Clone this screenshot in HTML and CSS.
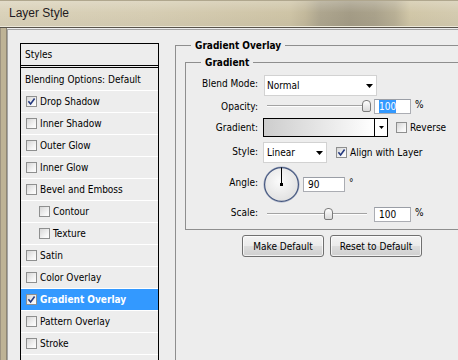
FILE: index.html
```html
<!DOCTYPE html>
<html>
<head>
<meta charset="utf-8">
<link rel="stylesheet" href="styles.css">
</head>
<body>
<div class="titlebar"><span class="title">Layer Style</span></div>
<div class="frame">
  <div class="client">
    <ul class="list">
      <li class="head">Styles</li>
      <li class="blend">Blending Options: Default</li>
      <li><span class="cb"><svg viewBox="0 0 9 9" width="9" height="9"><path d="M1.4 4.3 L3.6 6.9 L7.6 1.6" fill="none" stroke="#24397f" stroke-width="1.6"/></svg></span>Drop Shadow</li>
      <li><span class="cb"></span>Inner Shadow</li>
      <li><span class="cb"></span>Outer Glow</li>
      <li><span class="cb"></span>Inner Glow</li>
      <li><span class="cb"></span>Bevel and Emboss</li>
      <li class="sub"><span class="cb"></span>Contour</li>
      <li class="sub"><span class="cb"></span>Texture</li>
      <li><span class="cb"></span>Satin</li>
      <li><span class="cb"></span>Color Overlay</li>
      <li class="selected"><span class="cb"><svg viewBox="0 0 9 9" width="9" height="9"><path d="M1.4 4.3 L3.6 6.9 L7.6 1.6" fill="none" stroke="#24397f" stroke-width="1.6"/></svg></span>Gradient Overlay</li>
      <li><span class="cb"></span>Pattern Overlay</li>
      <li><span class="cb"></span>Stroke</li>
    </ul>
    <div class="panel">
      <div class="group outer">
        <div class="group-title">Gradient Overlay</div>
        <div class="group inner">
          <div class="group-title">Gradient</div>
          <div class="form">
            <div class="row r1">
              <span class="label up2">Blend Mode:</span>
              <div class="select sel-blend"><span>Normal</span><svg class="arrow" width="7" height="4" viewBox="0 0 7 4"><path d="M0 0H7L3.5 4Z" fill="#000"/></svg></div>
            </div>
            <div class="row r2">
              <span class="label">Opacity:</span>
              <div class="slider"><div class="track"></div><div class="thumb" style="left:98px"></div></div>
              <div class="field f-pct"><span class="hl">100</span></div>
              <span class="unit">%</span>
            </div>
            <div class="row r3">
              <span class="label">Gradient:</span>
              <div class="grad"><div class="grad-fill"></div><div class="grad-arrow"><svg width="5" height="3" viewBox="0 0 5 3"><path d="M0 0H5L2.5 3Z" fill="#000"/></svg></div></div>
              <span class="cb cb-rev"></span><span>Reverse</span>
            </div>
            <div class="row r4">
              <span class="label up1">Style:</span>
              <div class="select sel-style"><span>Linear</span><svg class="arrow" width="7" height="4" viewBox="0 0 7 4"><path d="M0 0H7L3.5 4Z" fill="#000"/></svg></div>
              <span class="cb cb-align"><svg viewBox="0 0 9 9" width="9" height="9"><path d="M1.4 4.3 L3.6 6.9 L7.6 1.6" fill="none" stroke="#24397f" stroke-width="1.6"/></svg></span><span>Align with Layer</span>
            </div>
            <div class="row r5">
              <span class="label up2">Angle:</span>
              <svg class="dial" width="37" height="37" viewBox="0 0 37 37">
                <defs>
                  <radialGradient id="dg" cx="45%" cy="40%" r="65%">
                    <stop offset="0" stop-color="#fbfbfb"/>
                    <stop offset="1" stop-color="#dedede"/>
                  </radialGradient>
                </defs>
                <circle cx="18.5" cy="18.5" r="17.6" fill="url(#dg)" stroke="#9aa5bf" stroke-width="0.8"/>
                <circle cx="18.5" cy="18.5" r="16.9" fill="none" stroke="#45577f" stroke-width="1.2"/>
                <line x1="18.5" y1="18.5" x2="18.5" y2="1.5" stroke="#000" stroke-width="1"/>
                <rect x="17" y="17" width="3" height="3" fill="#000"/>
              </svg>
              <div class="field f-angle">90</div>
              <span class="deg">°</span>
            </div>
            <div class="row r6">
              <span class="label up1">Scale:</span>
              <div class="slider"><div class="track"></div><div class="thumb" style="left:60px"></div></div>
              <div class="field f-pct">100</div>
              <span class="unit">%</span>
            </div>
          </div>
        </div>
        <div class="buttons">
          <div class="btn b-make">Make Default</div>
          <div class="btn b-reset">Reset to Default</div>
        </div>
      </div>
    </div>
  </div>
</div>
</body>
</html>
```
FILE: styles.css
```css
* { box-sizing: border-box; }
html, body {
  margin: 0;
  width: 458px;
  height: 360px;
  overflow: hidden;
}
body {
  font-family: "DejaVu Sans Condensed", "Liberation Sans", sans-serif;
  font-size: 10px;
  color: #000;
  background: #ededed;
}

.titlebar {
  height: 28px;
  border-top: 1px solid #b0a78e;
  border-bottom: 1px solid #57524a;
  box-shadow: inset 0 -1px 0 #ece8d9;
  display: flex;
  align-items: center;
  padding: 0 0 2px 9px;
  background:
    linear-gradient(180deg, rgba(255,255,255,0.22), rgba(255,255,255,0) 45%, rgba(0,0,0,0.03)),
    linear-gradient(90deg, #dad2ba 0px, #d6cdb3 150px, #cec4a6 290px, #c3b99c 305px, #aea68f 320px, #a49c86 350px, #aaa28b 375px, #b9b096 395px, #d1c7a8 410px, #d4cbb0 458px);
}
.title {
  font-family: "Liberation Sans", sans-serif;
  font-size: 12px;
  color: #1e1a22;
}

.frame {
  height: 332px;
  padding: 1px 0 0 7px;
  background: linear-gradient(90deg, #9d9381 0 1px, #beb396 1px 6px, #8d8574 6px 7px, #ededed 7px);
}
.client {
  height: 100%;
  border-top: 1px solid #a4a4a4;
  border-left: 1px solid #a4a4a4;
  display: flex;
  align-items: flex-start;
  padding: 13px 0 0 12px;
}

.list {
  flex: none;
  width: 139px;
  height: 317px;
  margin: 0;
  padding: 0;
  list-style: none;
  border: 1px solid #000;
  border-bottom: none;
}
.list li {
  height: 22px;
  border-bottom: 1px solid #fff;
  display: flex;
  align-items: center;
  padding-left: 5px;
  white-space: nowrap;
}
.list li.head {
  height: 24px;
  border-bottom: 3px double #000;
  padding-left: 4px;
}
.list li.blend {
  height: 23px;
  padding-left: 4px;
}
.list li.sub { padding-left: 18px; }
.list li.selected {
  background: #3399ff;
  color: #fff;
  font-weight: bold;
}

.cb {
  flex: none;
  width: 11px;
  height: 11px;
  border: 1px solid #8e8f8f;
  background: linear-gradient(135deg, #d6d6d6, #f6f6f6 70%, #fdfdfd);
  margin-right: 3px;
  display: flex;
}
.cb svg { display: block; }

.panel {
  flex: 1;
  margin: 2px 0 0 16px;
}
.group {
  border-top: 1px solid #8e8e8e;
  border-left: 1px solid #8e8e8e;
}
.outer { height: 315px; }
.group-title {
  width: max-content;
  margin: -7px 0 0 15px;
  padding: 0 4px;
  line-height: 13px;
  background: #ededed;
  font-weight: bold;
}
.inner {
  margin: 10px 0 0 9px;
  border-bottom: 1px solid #8e8e8e;
  padding-bottom: 3px;
}
.form { margin-top: 5px; }

.row {
  display: flex;
  align-items: center;
  white-space: nowrap;
}
.r1 { height: 23px; }
.r2 { height: 18px; }
.r3 { height: 24px; }
.r4 { height: 27px; }
.r5 { height: 36px; }
.r6 { height: 24px; }

.label {
  flex: none;
  width: 72px;
  text-align: right;
  margin-right: 5px;
}
.label.up1 { margin-bottom: 3px; }
.label.up2 { margin-bottom: 4px; }

.select {
  flex: none;
  height: 21px;
  background: #fff;
  border: 1px solid #d2d2d2;
  display: flex;
  align-items: center;
  justify-content: space-between;
  padding: 0 3px 0 3px;
}
.select .arrow { margin-top: 1px; }
.sel-blend { width: 113px; margin-left: 1px; padding-left: 2px; }
.sel-style { width: 64px; }

.slider {
  flex: none;
  position: relative;
  width: 106px;
  height: 14px;
  margin-left: 1px;
  display: flex;
  align-items: center;
}
.track {
  flex: 1;
  margin: 0 3px;
  height: 2px;
  border-top: 1px solid #a3a3a3;
  border-bottom: 1px solid #fdfdfd;
}
.thumb {
  position: absolute;
  top: 1px;
  width: 9px;
  height: 12px;
  border: 1px solid #7b7b7b;
  border-radius: 4px 4px 2px 2px;
  background: linear-gradient(#ffffff, #dadada);
}

.field {
  flex: none;
  height: 15px;
  border: 1px solid #abadb3;
  border-top-color: #9a9ea6;
  background: #fff;
  display: flex;
  align-items: center;
  padding-left: 4px;
}
.f-pct { width: 37px; margin-left: 4px; }
.f-angle { width: 42px; margin-left: 3px; padding-left: 4px; }
.hl {
  background: #3399ff;
  color: #fff;
  line-height: 13px;
}
.unit { margin-left: 4px; margin-bottom: 3px; }
.deg { margin-left: 4px; margin-bottom: 4px; }

.grad {
  flex: none;
  width: 125px;
  height: 19px;
  border: 1px solid #000;
  display: flex;
}
.grad-fill {
  flex: 1;
  border-right: 1px solid #000;
  background: linear-gradient(90deg, #cdcdcd, #f2f2f2 75%, #ffffff);
}
.grad-arrow {
  flex: none;
  width: 12px;
  background: #fff;
  display: flex;
  align-items: center;
  justify-content: center;
}
.cb-rev { margin-left: 8px; }
.cb-align { margin-left: 9px; }

.dial { flex: none; display: block; }

.buttons {
  display: flex;
  gap: 6px;
  margin: 5px 0 0 66px;
}
.btn {
  height: 22px;
  border: 1px solid #707070;
  border-radius: 3px;
  box-shadow: inset 0 0 0 1px rgba(255,255,255,0.7);
  background: linear-gradient(#f3f3f3 0%, #ebebeb 48%, #dddddd 52%, #cfcfcf 100%);
  display: flex;
  align-items: center;
  justify-content: center;
}
.b-make { width: 82px; }
.b-reset { width: 92px; }
```
